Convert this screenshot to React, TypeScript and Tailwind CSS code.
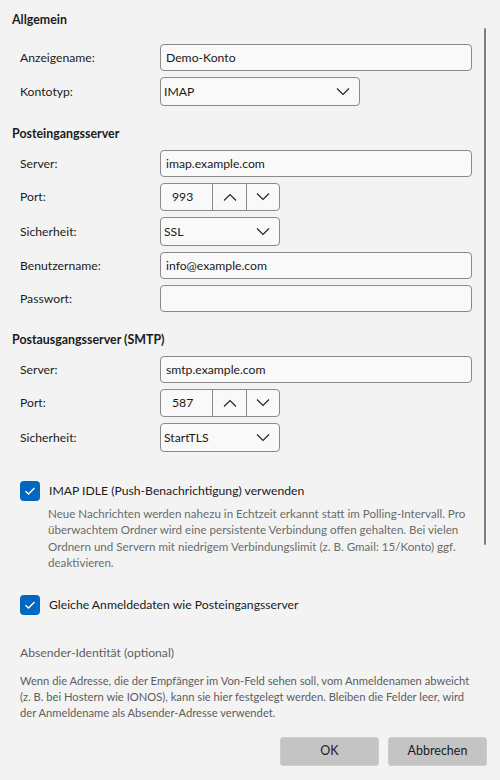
import type { ReactNode } from "react";

const font = { fontFamily: '"Segoe UI", Lato, "Liberation Sans", sans-serif' };

function Chevron({ up = false }: { up?: boolean }) {
  return (
    <svg width="14" height="8" viewBox="0 0 14 8" fill="none" className="shrink-0">
      <polyline
        points={up ? "1,7.5 7,1.5 13,7.5" : "1,0.5 7,6.5 13,0.5"}
        stroke="#1f1f1f"
        strokeWidth="1.1"
      />
    </svg>
  );
}

function Row({ label, children }: { label: string; children: ReactNode }) {
  return (
    <div className="flex items-center pl-2">
      <div className="w-[140px] text-[12.2px] leading-[18px] text-[#1b1b1b]">{label}</div>
      {children}
    </div>
  );
}

function TextField({ value = "" }: { value?: string }) {
  return (
    <div className="flex h-[27px] w-[312px] items-center rounded-[4px] border border-[#8a8a8a] bg-[#f9f9f9] px-[5px] text-[12.2px] leading-[18px] text-[#1a1a1a]">
      {value}
    </div>
  );
}

function Select({ value, width }: { value: string; width: string }) {
  return (
    <div
      className={`flex h-[29px] items-center justify-between rounded-[4px] border border-[#8a8a8a] bg-[#f9f9f9] pl-[3px] pr-[9px] text-[12.2px] leading-[18px] text-[#1a1a1a] ${width}`}
    >
      <span>{value}</span>
      <Chevron />
    </div>
  );
}

function Spinner({ value }: { value: string }) {
  return (
    <div className="flex h-[28px] w-[120px] overflow-hidden rounded-[4px] border border-[#8a8a8a] bg-[#f9f9f9] text-[12.2px] leading-[18px] text-[#1a1a1a]">
      <div className="flex w-[51px] items-center pl-[11px]">{value}</div>
      <div className="flex w-[34px] items-center justify-center border-l border-[#8a8a8a]">
        <Chevron up />
      </div>
      <div className="flex flex-1 items-center justify-center border-l border-[#8a8a8a]">
        <Chevron />
      </div>
    </div>
  );
}

function Check({ label }: { label: string }) {
  return (
    <div className="flex items-center gap-[9px] pl-2">
      <div className="flex h-[20px] w-[20px] items-center justify-center rounded-[4px] bg-[#0067c0]">
        <svg width="12" height="10" viewBox="0 0 12 10" fill="none">
          <polyline points="1.5,5.2 4.5,8 10.5,2" stroke="white" strokeWidth="1.4" />
        </svg>
      </div>
      <span className="text-[12.2px] leading-[18px] text-[#1b1b1b]">{label}</span>
    </div>
  );
}

function Heading({ children }: { children: ReactNode }) {
  return <h2 className="h-[18px] text-[12.4px] leading-[18px] font-bold text-[#1b1b1b]">{children}</h2>;
}

export default function App() {
  return (
    <div className="relative h-[780px] w-[500px] overflow-hidden bg-[#f3f3f3]" style={font}>
      {/* scrollbar thumb */}
      <div className="absolute right-[14px] top-[28px] h-[517px] w-[2px] rounded-full bg-[#7f7f7f]" />

      <div className="flex flex-col pl-3 pt-[11px]">
        <Heading>Allgemein</Heading>
        <div className="mt-[15px] flex flex-col gap-[6px]">
          <Row label="Anzeigename:">
            <TextField value="Demo-Konto" />
          </Row>
          <Row label="Kontotyp:">
            <Select value="IMAP" width="w-[200px]" />
          </Row>
        </div>

        <div className="mt-[19px]">
          <Heading>Posteingangsserver</Heading>
        </div>
        <div className="mt-[7px] flex flex-col gap-[6px]">
          <Row label="Server:">
            <TextField value="imap.example.com" />
          </Row>
          <Row label="Port:">
            <Spinner value="993" />
          </Row>
          <Row label="Sicherheit:">
            <Select value="SSL" width="w-[120px]" />
          </Row>
          <Row label="Benutzername:">
            <TextField value="info@example.com" />
          </Row>
          <Row label="Passwort:">
            <TextField />
          </Row>
        </div>

        <div className="mt-[19px]">
          <Heading>Postausgangsserver (SMTP)</Heading>
        </div>
        <div className="mt-[7px] flex flex-col gap-[6px]">
          <Row label="Server:">
            <TextField value="smtp.example.com" />
          </Row>
          <Row label="Port:">
            <Spinner value="587" />
          </Row>
          <Row label="Sicherheit:">
            <Select value="StartTLS" width="w-[120px]" />
          </Row>
        </div>

        <div className="mt-[29px]">
          <Check label="IMAP IDLE (Push-Benachrichtigung) verwenden" />
        </div>
        <p className="mt-[5px] whitespace-nowrap pl-[36px] text-[11.6px] leading-[16.4px] text-[#6b6b6b]">
          Neue Nachrichten werden nahezu in Echtzeit erkannt statt im Polling-Intervall. Pro
          <br />
          überwachtem Ordner wird eine persistente Verbindung offen gehalten. Bei vielen
          <br />
          Ordnern und Servern mit niedrigem Verbindungslimit (z. B. Gmail: 15/Konto) ggf.
          <br />
          deaktivieren.
        </p>

        <div className="mt-[23px]">
          <Check label="Gleiche Anmeldedaten wie Posteingangsserver" />
        </div>

        <div className="mt-[29px] pl-2 text-[12.2px] leading-[18px] text-[#5e5e5e]">Absender-Identität (optional)</div>
        <p className="mt-[11px] whitespace-nowrap pl-2 text-[11.2px] leading-[16px] text-[#5e5e5e]">
          Wenn die Adresse, die der Empfänger im Von-Feld sehen soll, vom Anmeldenamen abweicht
          <br />
          (z. B. bei Hostern wie IONOS), kann sie hier festgelegt werden. Bleiben die Felder leer, wird
          <br />
          der Anmeldename als Absender-Adresse verwendet.
        </p>

        <div className="mt-[16px] flex justify-end gap-[9px] pr-[13px]">
          <button className="h-[29px] w-[99px] rounded-[3px] border border-[#cdcdcd] bg-[#c4c4c4] text-[12.5px] text-[#1b1b1b]">
            OK
          </button>
          <button className="h-[29px] w-[99px] rounded-[3px] border border-[#cdcdcd] bg-[#c4c4c4] text-[12.5px] text-[#1b1b1b]">
            Abbrechen
          </button>
        </div>
      </div>
    </div>
  );
}
